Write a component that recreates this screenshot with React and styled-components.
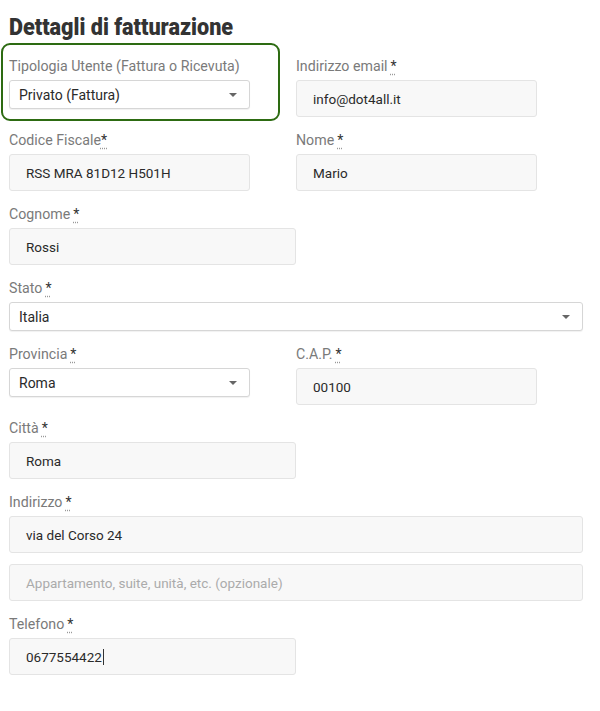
import React from "react";
import styled, { createGlobalStyle } from "styled-components";

const Global = createGlobalStyle`
  body {
    margin: 0;
    background: #fff;
    font-family: Roboto, "Liberation Sans", sans-serif;
  }
`;

const Page = styled.div`
  width: 574px;
  padding: 0 0 30px 9px;
`;

const Title = styled.h2`
  display: inline-block;
  margin: 0;
  padding-top: 13px;
  font-family: Roboto, "Liberation Sans", sans-serif;
  font-weight: 900;
  font-size: 24px;
  line-height: 28px;
  color: #333;
  transform: scaleX(0.9);
  transform-origin: left center;
`;

const Form = styled.div`
  display: grid;
  grid-template-columns: 287px 287px;
  row-gap: 13px;
  margin-top: 15px;
`;

const Field = styled.div`
  position: relative;
  grid-column: ${(p) => (p.$full ? "1 / 3" : "auto")};

  ${(p) =>
    p.$highlight &&
    `
    &::before {
      content: "";
      position: absolute;
      top: -13px;
      left: -8px;
      right: 16px;
      bottom: -4px;
      border: 2.5px solid #2d6b12;
      border-radius: 9px;
      pointer-events: none;
    }
  `}
`;

const Label = styled.div`
  font-size: 14.2px;
  line-height: 20px;
  height: 20px;
  margin-bottom: 4px;
  color: #7a7a7a;
`;

const Req = styled.abbr`
  color: #333;
  text-decoration: underline dotted #999;
  text-underline-offset: 3px;
  margin-left: ${(p) => (p.$tight ? "0" : "3px")};
`;

const Input = styled.div`
  box-sizing: border-box;
  width: ${(p) => p.$width || "100%"};
  height: 37px;
  margin-top: ${(p) => p.$mt || "0"};
  display: flex;
  align-items: center;
  padding: 0 16px;
  background: #f8f8f8;
  border: 1px solid #e4e4e4;
  border-radius: 3px;
  font-size: 13.5px;
  color: ${(p) => (p.$placeholder ? "#ababab" : "#2a2a2a")};
`;

const Select = styled.div`
  box-sizing: border-box;
  width: ${(p) => p.$width || "100%"};
  height: 29px;
  display: flex;
  align-items: center;
  justify-content: space-between;
  padding: 0 12px 0 9px;
  background: #fff;
  border: 1px solid #d6d6d6;
  border-radius: 3px;
  box-shadow: 0 1px 1px rgba(0, 0, 0, 0.06);
  font-size: 14px;
  color: #2a2a2a;
`;

const Caret = styled.span`
  width: 0;
  height: 0;
  border-left: 4px solid transparent;
  border-right: 4px solid transparent;
  border-top: 4px solid #666;
`;

const Cursor = styled.span`
  display: inline-block;
  width: 1px;
  height: 16px;
  margin-left: 1px;
  background: #333;
`;

const Star = ({ tight }) => (
  <Req $tight={tight} title="obbligatorio">*</Req>
);

export default function App() {
  return (
    <Page>
      <Global />
      <Title>Dettagli di fatturazione</Title>
      <Form>
        <Field $highlight>
          <Label>Tipologia Utente (Fattura o Ricevuta)</Label>
          <Select $width="241px">
            <span>Privato (Fattura)</span>
            <Caret />
          </Select>
        </Field>
        <Field>
          <Label>Indirizzo email<Star /></Label>
          <Input $width="241px">info@dot4all.it</Input>
        </Field>

        <Field>
          <Label>Codice Fiscale<Star tight /></Label>
          <Input $width="241px">RSS MRA 81D12 H501H</Input>
        </Field>
        <Field>
          <Label>Nome<Star /></Label>
          <Input $width="241px">Mario</Input>
        </Field>

        <Field>
          <Label>Cognome<Star /></Label>
          <Input>Rossi</Input>
        </Field>

        <Field $full>
          <Label>Stato<Star /></Label>
          <Select>
            <span>Italia</span>
            <Caret />
          </Select>
        </Field>

        <Field>
          <Label>Provincia<Star /></Label>
          <Select $width="241px">
            <span>Roma</span>
            <Caret />
          </Select>
        </Field>
        <Field>
          <Label>C.A.P.<Star /></Label>
          <Input $width="241px">00100</Input>
        </Field>

        <Field>
          <Label>Città<Star /></Label>
          <Input>Roma</Input>
        </Field>

        <Field $full>
          <Label>Indirizzo<Star /></Label>
          <Input>via del Corso 24</Input>
          <Input $placeholder $mt="11px">
            Appartamento, suite, unità, etc. (opzionale)
          </Input>
        </Field>

        <Field>
          <Label>Telefono<Star /></Label>
          <Input>
            0677554422
            <Cursor />
          </Input>
        </Field>
      </Form>
    </Page>
  );
}
